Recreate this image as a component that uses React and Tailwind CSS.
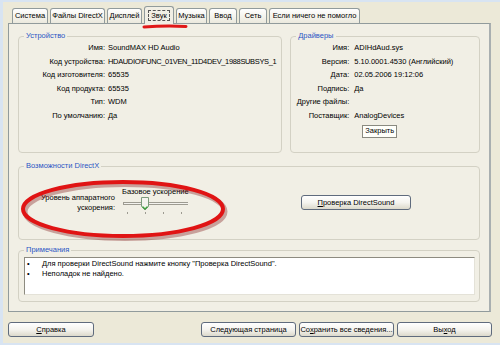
import React from "react";

const Row = ({ label, value, labelW, gap, valueClass = "" }) => (
	<div className="flex h-[13.6px] leading-[13.6px] whitespace-nowrap">
		<div className="text-right shrink-0" style={{ width: labelW }}>
			{label}
		</div>
		<div className={valueClass} style={{ marginLeft: gap }}>
			{value}
		</div>
	</div>
);

const Group = ({ title, className, children }) => (
	<fieldset className={"border border-[#d3d1c4] rounded-[4px] min-w-0 " + className}>
		<legend className="ml-[5px] px-[2px] leading-[10px] text-[#2a55c4]">{title}</legend>
		{children}
	</fieldset>
);

const XpButton = ({ children, className }) => (
	<button
		className={
			"h-[15px] rounded-[3px] border border-[#5f6b7d] bg-gradient-to-b from-white via-[#f5f4ef] to-[#dcd9cb] text-[7.5px] leading-[13px] text-black " +
			className
		}
	>
		{children}
	</button>
);

const tabs = [
	{ name: "Система", w: 36 },
	{ name: "Файлы DirectX", w: 55 },
	{ name: "Дисплей", w: 35 },
	{ name: "Звук", w: 30, active: true },
	{ name: "Музыка", w: 31 },
	{ name: "Ввод", w: 28 },
	{ name: "Сеть", w: 28 },
	{ name: "Если ничего не помогло", w: 91 },
];

export default function App() {
	return (
		<div
			className="relative w-[500px] h-[345px] overflow-hidden bg-[#ece9d8] border-t-2 border-l-[3px] border-b-2 border-[#d8e4f2] text-[7.5px] text-black"
			style={{ fontFamily: '"Liberation Sans", Arial, sans-serif' }}
		>
			{/* tabs */}
			<div className="flex items-end gap-[2px] ml-[9px] mt-[4px] h-[17px] relative z-10">
				{tabs.map((t) =>
					t.active ? (
						<div
							key={t.name}
							className="h-[18px] -mb-px flex items-center justify-center rounded-t-[3px] border border-b-0 border-[#919b9c] bg-[#f1efe5]"
							style={{ width: t.w }}
						>
							<span className="border border-dashed border-[#555] px-[2px] leading-[9px]">{t.name}</span>
						</div>
					) : (
						<div
							key={t.name}
							className="h-[15px] flex items-center justify-center rounded-t-[3px] border border-b-0 border-[#919b9c] bg-gradient-to-b from-white to-[#ebe9dd] whitespace-nowrap"
							style={{ width: t.w }}
						>
							{t.name}
						</div>
					)
				)}
			</div>

			{/* tab panel */}
			<div className="ml-[5px] w-[483px] h-[289px] border border-[#919b9c] border-r-2 border-r-[#a9afb0] bg-[#f1efe5] px-[9px] pt-[7px] flex flex-col">
				<div className="flex gap-[8px]">
					<Group title="Устройство" className="w-[266px] h-[122px]">
						<Row labelW={86} gap={3} label="Имя:" value="SoundMAX HD Audio" />
						<Row
							labelW={86}
							gap={3}
							label="Код устройства:"
							value="HDAUDIO\FUNC_01VEN_11D4DEV_1988SUBSYS_1"
							valueClass="tracking-[-0.35px]"
						/>
						<Row labelW={86} gap={3} label="Код изготовителя:" value="65535" />
						<Row labelW={86} gap={3} label="Код продукта:" value="65535" />
						<Row labelW={86} gap={3} label="Тип:" value="WDM" />
						<Row labelW={86} gap={3} label="По умолчанию:" value="Да" />
					</Group>
					<Group title="Драйверы" className="w-[191px] h-[122px]">
						<Row labelW={58} gap={5} label="Имя:" value="ADIHdAud.sys" />
						<Row labelW={58} gap={5} label="Версия:" value="5.10.0001.4530 (Английский)" />
						<Row labelW={58} gap={5} label="Дата:" value="02.05.2006 19:12:06" />
						<Row labelW={58} gap={5} label="Подпись:" value="Да" />
						<Row labelW={58} gap={5} label="Другие файлы:" value="" />
						<Row labelW={58} gap={5} label="Поставщик:" value="AnalogDevices" />
						<div className="ml-[71px] mt-[2px] w-[35px] h-[13px] border border-[#8a8a80] bg-[#fffffa] flex items-center justify-center">
							Закрыть
						</div>
					</Group>
				</div>

				<Group title="Возможности DirectX" className="mt-[8px] h-[79px]">
					<div className="flex items-start">
						<div className="w-[96px] mt-[22px] text-right leading-[10px]">
							Уровень аппаратного
							<br />
							ускорения:
						</div>
						<div className="ml-[7px] w-[68px] mt-[16px]">
							<div className="leading-[9px] whitespace-nowrap">Базовое ускорение</div>
							<div className="relative h-[18px] mt-[1px]">
								<div className="absolute left-[1px] right-[2px] top-[5px] h-[3px] border-t border-l border-[#9d9b91] border-b border-r-white bg-[#f4f3ee]" />
								<svg className="absolute left-[19px] top-[0px]" width="8" height="14" viewBox="0 0 8 14">
									<path d="M0.5 0.5 H7.5 V9.5 L4 13 L0.5 9.5 Z" fill="#f4f3ee" stroke="#7b9a7b" />
									<path d="M1.5 9.5 L4 12 L6.5 9.5" fill="none" stroke="#3ea43e" strokeWidth="1.2" />
								</svg>
								<div className="absolute top-[15px] left-[5px] w-px h-[2px] bg-[#9d9b91]" />
								<div className="absolute top-[15px] left-[23px] w-px h-[2px] bg-[#9d9b91]" />
								<div className="absolute top-[15px] left-[41px] w-px h-[2px] bg-[#9d9b91]" />
								<div className="absolute top-[15px] left-[59px] w-px h-[2px] bg-[#9d9b91]" />
							</div>
						</div>
						<XpButton className="ml-[111px] mt-[24px] w-[110px] h-[15px]">
							<span className="underline">П</span>роверка DirectSound
						</XpButton>
					</div>
				</Group>

				<Group title="Примечания" className="mt-[5px] h-[57px]">
					<div className="ml-[5px] mr-[4px] mt-[2px] h-[38px] border border-[#8d8b80] border-r-[#e4e2d8] border-b-[#e4e2d8] bg-white pt-[1px] leading-[9.5px]">
						<div className="flex">
							<span className="w-[17px] pl-[2px]">•</span>
							<span>Для проверки DirectSound нажмите кнопку "Проверка DirectSound".</span>
						</div>
						<div className="flex">
							<span className="w-[17px] pl-[2px]">•</span>
							<span>Неполадок не найдено.</span>
						</div>
					</div>
				</Group>
			</div>

			{/* bottom buttons */}
			<div className="flex ml-[5px] mt-[10px]">
				<XpButton className="w-[86px]">
					<span className="underline">С</span>правка
				</XpButton>
				<XpButton className="ml-[107px] w-[95px]">Следующая страница</XpButton>
				<XpButton className="ml-[3px] w-[95px]">
					Со<span className="underline">х</span>ранить все сведения...
				</XpButton>
				<XpButton className="ml-[3px] w-[95px]">
					Вы<span className="underline">х</span>од
				</XpButton>
			</div>

			{/* red annotation marks */}
			<svg className="absolute left-0 top-0 pointer-events-none" width="500" height="345" viewBox="0 0 500 345">
				<path d="M141 25 Q162 23.5 183 24.5" fill="none" stroke="#e01818" strokeWidth="3" strokeLinecap="round" />
				<ellipse cx="121" cy="208" rx="100" ry="27" fill="none" stroke="#7a1010" strokeOpacity="0.35" strokeWidth="5" transform="translate(1 1.5)" />
				<ellipse cx="120" cy="207" rx="100" ry="27" fill="none" stroke="#e01414" strokeWidth="4" />
			</svg>
		</div>
	);
}
